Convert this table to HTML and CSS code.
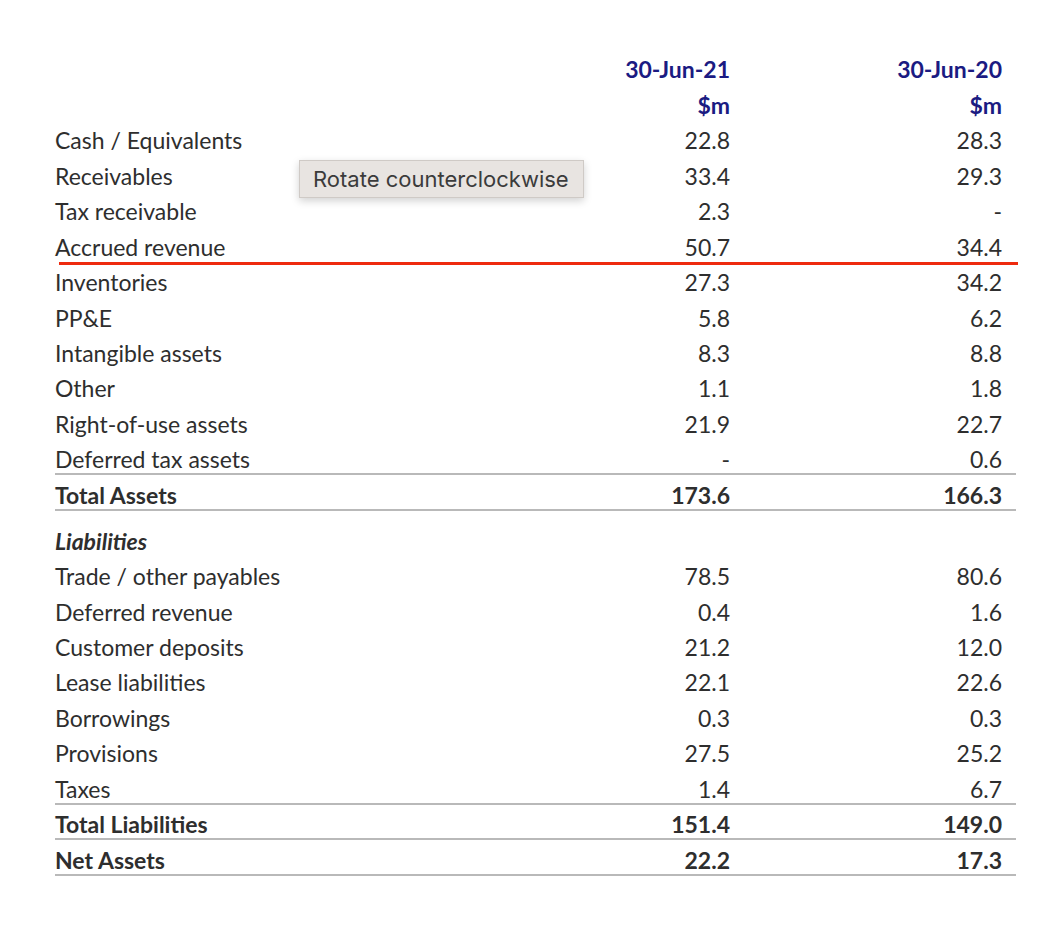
FILE: index.html
```html
<!DOCTYPE html>
<html>
<head>
<meta charset="utf-8">
<link rel="stylesheet" href="styles.css">
</head>
<body>
<div class="sheet">
  <div class="row head"><span class="label"></span><span class="v1">30-Jun-21</span><span class="v2">30-Jun-20</span></div>
  <div class="row head"><span class="label"></span><span class="v1">$m</span><span class="v2">$m</span></div>
  <div class="row"><span class="label">Cash / Equivalents</span><span class="v1">22.8</span><span class="v2">28.3</span></div>
  <div class="row"><span class="label">Receivables</span><span class="v1">33.4</span><span class="v2">29.3</span></div>
  <div class="row"><span class="label">Tax receivable</span><span class="v1">2.3</span><span class="v2">-</span></div>
  <div class="row red"><span class="label">Accrued revenue</span><span class="v1">50.7</span><span class="v2">34.4</span></div>
  <div class="row"><span class="label">Inventories</span><span class="v1">27.3</span><span class="v2">34.2</span></div>
  <div class="row"><span class="label">PP&amp;E</span><span class="v1">5.8</span><span class="v2">6.2</span></div>
  <div class="row"><span class="label">Intangible assets</span><span class="v1">8.3</span><span class="v2">8.8</span></div>
  <div class="row"><span class="label">Other</span><span class="v1">1.1</span><span class="v2">1.8</span></div>
  <div class="row"><span class="label">Right-of-use assets</span><span class="v1">21.9</span><span class="v2">22.7</span></div>
  <div class="row line"><span class="label">Deferred tax assets</span><span class="v1">-</span><span class="v2">0.6</span></div>
  <div class="row line total"><span class="label">Total Assets</span><span class="v1">173.6</span><span class="v2">166.3</span></div>
  <div class="spacer"></div>
  <div class="row section"><span class="label">Liabilities</span><span class="v1"></span><span class="v2"></span></div>
  <div class="row"><span class="label">Trade / other payables</span><span class="v1">78.5</span><span class="v2">80.6</span></div>
  <div class="row"><span class="label">Deferred revenue</span><span class="v1">0.4</span><span class="v2">1.6</span></div>
  <div class="row"><span class="label">Customer deposits</span><span class="v1">21.2</span><span class="v2">12.0</span></div>
  <div class="row"><span class="label">Lease liabilities</span><span class="v1">22.1</span><span class="v2">22.6</span></div>
  <div class="row"><span class="label">Borrowings</span><span class="v1">0.3</span><span class="v2">0.3</span></div>
  <div class="row"><span class="label">Provisions</span><span class="v1">27.5</span><span class="v2">25.2</span></div>
  <div class="row line"><span class="label">Taxes</span><span class="v1">1.4</span><span class="v2">6.7</span></div>
  <div class="row line total"><span class="label">Total Liabilities</span><span class="v1">151.4</span><span class="v2">149.0</span></div>
  <div class="row line total"><span class="label">Net Assets</span><span class="v1">22.2</span><span class="v2">17.3</span></div>
  <div class="tooltip">Rotate counterclockwise</div>
</div>
</body>
</html>
```
FILE: styles.css
```css
html, body {
  margin: 0;
  padding: 0;
  background: #ffffff;
}
.sheet {
  position: relative;
  width: 961px;
  margin-left: 55px;
  padding-top: 50px;
  font-family: Lato, "Liberation Sans", sans-serif;
  font-size: 23px;
  color: #2e2e2e;
}
.row {
  display: flex;
  align-items: flex-end;
  height: 35.45px;
  box-sizing: border-box;
  padding-bottom: 3px;
  line-height: 25px;
}
.label {
  width: 500px;
  white-space: nowrap;
}
.v1 {
  width: 175px;
  text-align: right;
}
.v2 {
  width: 272px;
  text-align: right;
}
.head {
  color: #1b1b82;
  font-weight: bold;
}
.line {
  border-bottom: 2px solid #b9b9b9;
  padding-bottom: 1px;
}
.total {
  font-weight: bold;
}
.section .label {
  font-weight: bold;
  font-style: italic;
}
.spacer {
  height: 10.5px;
}
.red {
  position: relative;
}
.red::after {
  content: "";
  position: absolute;
  left: 4px;
  right: -2px;
  bottom: -2px;
  height: 3px;
  background: #ee2a0e;
}
.tooltip {
  position: absolute;
  left: 244px;
  top: 160px;
  width: 285px;
  height: 38px;
  box-sizing: border-box;
  padding-left: 13px;
  background: #e8e4e1;
  border: 1px solid #cfcac6;
  box-shadow: 0 3px 8px rgba(0, 0, 0, 0.18);
  font-family: Inter, "Noto Sans", sans-serif;
  font-size: 22px;
  line-height: 36px;
  color: #3b3b3b;
  white-space: nowrap;
}
```
